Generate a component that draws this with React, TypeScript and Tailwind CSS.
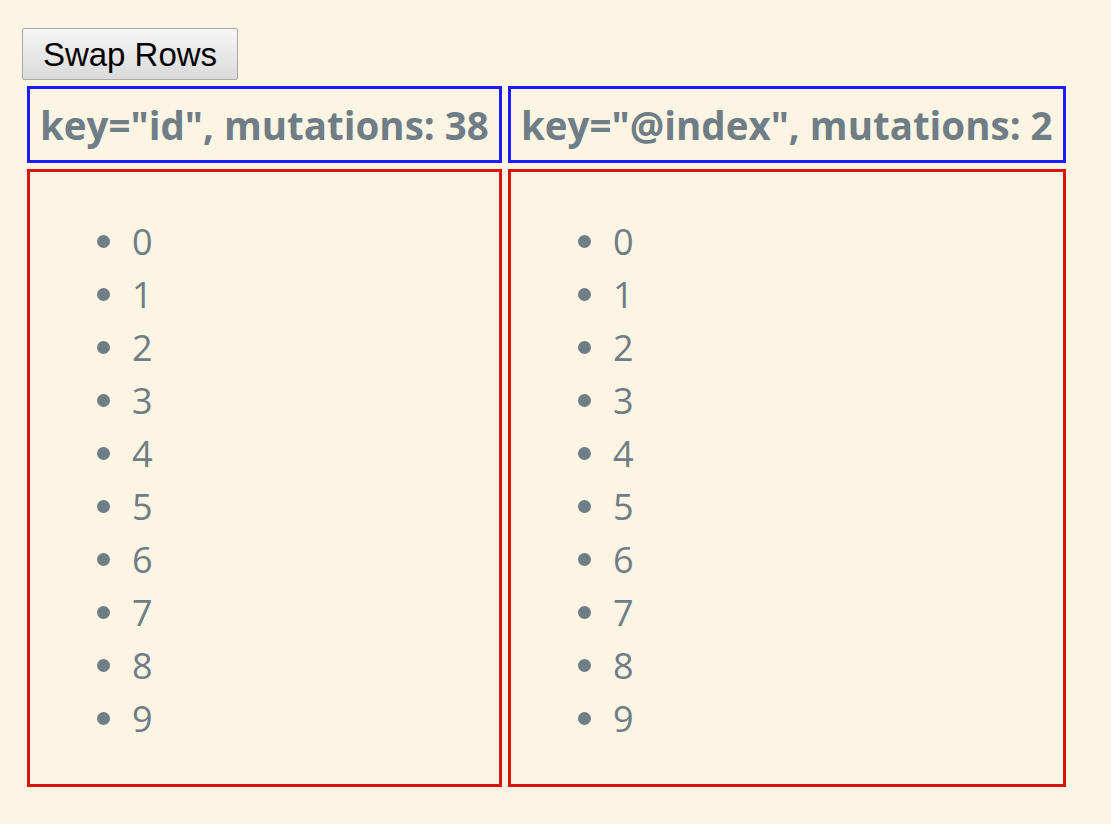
import React from "react";

const items = [0, 1, 2, 3, 4, 5, 6, 7, 8, 9];

function List() {
  return (
    <ul className="pt-[43px] pl-[67px]">
      {items.map((n) => (
        <li key={n} className="flex items-center h-[53px]">
          <span className="w-[13px] h-[13px] rounded-full bg-[#6f7d86] shrink-0" />
          <span className="ml-[22px] text-[36px] leading-[53px]">{n}</span>
        </li>
      ))}
    </ul>
  );
}

export default function App() {
  return (
    <div
      className="min-h-screen w-full bg-[#fcf5e3] pt-[28px] pl-[22px] text-[#6f7d86]"
      style={{ fontFamily: '"Open Sans", "Noto Sans", sans-serif' }}
    >
      <button
        className="h-[52px] w-[216px] border border-[#a9a9a9] rounded-[2px] bg-gradient-to-b from-[#f6f6f6] to-[#dadada] text-black text-[33px] leading-none flex items-center justify-center"
        style={{ fontFamily: '"Liberation Sans", Arial, sans-serif' }}
      >
        Swap Rows
      </button>
      <div className="mt-[6px] ml-[5px] grid grid-cols-[475px_558px] gap-[6px]">
        <div className="h-[77px] border-[3px] border-[#1c1cff] flex items-center pl-[10px] pt-[3px] text-[38.5px] font-bold whitespace-nowrap">
          key="id", mutations: 38
        </div>
        <div className="h-[77px] border-[3px] border-[#1c1cff] flex items-center pl-[10px] pt-[3px] text-[38.5px] font-bold whitespace-nowrap">
          key="@index", mutations: 2
        </div>
        <div className="h-[618px] border-[3px] border-[#d8140b]">
          <List />
        </div>
        <div className="h-[618px] border-[3px] border-[#d8140b]">
          <List />
        </div>
      </div>
    </div>
  );
}
